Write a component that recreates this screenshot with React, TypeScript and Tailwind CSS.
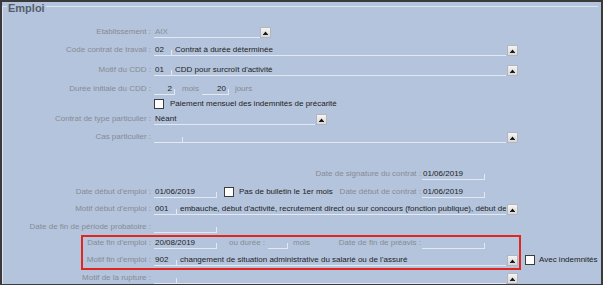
import type { ReactNode } from 'react';
import clsx from 'clsx';

const LINE = 'border-[#e2e9f3]';

function Label({ children, className }: { children: ReactNode; className?: string }) {
  return (
    <div className={clsx('h-[11px] shrink-0 whitespace-nowrap text-right leading-[10px] text-[#868b95]', className)}>
      {children}
    </div>
  );
}

function Field({
  w,
  tick,
  right,
  dim,
  pad = 'pl-[1px]',
  children,
}: {
  w: string;
  tick?: boolean;
  right?: boolean;
  dim?: boolean;
  pad?: string;
  children?: ReactNode;
}) {
  return (
    <div className={clsx('flex h-[11px] shrink-0 items-end border-b', LINE, w)}>
      <span
        className={clsx(
          'h-[10px] flex-1 overflow-hidden whitespace-nowrap leading-[10px]',
          right ? 'pr-[2px] text-right' : pad,
          dim ? 'text-[#8a8f99]' : 'text-[#1d1d1d]'
        )}
      >
        {children}
      </span>
      {tick && <span className="h-[5px] w-px bg-[#e2e9f3]" />}
    </div>
  );
}

function Arrow({ className }: { className?: string }) {
  return (
    <div
      className={clsx(
        'flex h-[11px] w-[11px] shrink-0 items-center justify-center border border-[#b3b7bd] bg-gradient-to-b from-[#f4f4f4] to-[#d8d8d8]',
        className
      )}
    >
      <svg width="5" height="4" viewBox="0 0 5 4" className="mt-[1px]">
        <path d="M2.5 0.5 L4.5 3 L0.5 3 Z" fill="#111" />
        <rect x="0" y="3" width="5" height="1" fill="#222" />
      </svg>
    </div>
  );
}

function Check({ className }: { className?: string }) {
  return <div className={clsx('mb-[1px] h-[10px] w-[10px] shrink-0 border border-[#3d3d3d] bg-white', className)} />;
}

function Combo({ label, code, codeW, text }: { label: string; code?: string; codeW: string; text?: string }) {
  return (
    <>
      <Label className="w-[148px]">{label}</Label>
      <Field w={clsx('ml-[3px]', codeW)} tick>
        {code}
      </Field>
      <Field w={codeW === 'w-[18px]' ? 'w-[334px]' : 'w-[329px]'} pad="pl-[3px]">
        {text}
      </Field>
      <Arrow className="ml-[1px]" />
    </>
  );
}

export default function App() {
  return (
    <div className="h-[285px] w-[605px] bg-white font-['Liberation_Sans',Arial,sans-serif] text-[8px]">
      <div className="h-[285px] w-[603px] overflow-hidden border-x-2 border-t-2 border-b border-[#3a3a3a] bg-[#b4c4dc]">
        <div className="mt-[4px] flex flex-col border-l border-[#dce4ef]">
          {/* group title */}
          <div className="flex h-[14px] items-start">
            <div className="w-[4px] border-t border-[#dce4ef]" />
            <div className="-mt-[4px] px-[1px] text-[11px] font-bold leading-[13px] text-[#565e6b]">Emploi</div>
            <div className="mr-[3px] flex-1 border-t border-[#dce4ef]" />
          </div>

          <div className="flex h-[18px] items-end">
            <Label className="w-[148px]">Etablissement :</Label>
            <Field w="ml-[3px] w-[106px]" dim>
              AIX
            </Field>
            <Arrow />
          </div>

          <div className="flex h-[18px] items-end">
            <Combo label="Code contrat de travail :" code="02" codeW="w-[18px]" text="Contrat à durée déterminée" />
          </div>

          <div className="flex h-[20px] items-end">
            <Combo label="Motif du CDD :" code="01" codeW="w-[18px]" text="CDD pour surcroît d'activité" />
          </div>

          <div className="flex h-[19px] items-end">
            <Label className="w-[148px]">Durée initiale du CDD :</Label>
            <Field w="ml-[3px] w-[21px]" tick right>
              2
            </Field>
            <Label className="ml-[7px]">mois</Label>
            <Field w="ml-[3px] w-[27px]" tick right>
              20
            </Field>
            <Label className="ml-[6px]">jours</Label>
          </div>

          <div className="flex h-[15px] items-end">
            <div className="flex h-[11px] items-center pl-[151px]">
              <Check className="mb-[2px]" />
              <span className="ml-[6px] mb-[1px] whitespace-nowrap text-[#1d1d1d]">
                Paiement mensuel des indemnités de précarité
              </span>
            </div>
          </div>

          <div className="flex h-[15px] items-end">
            <Label className="w-[148px]">Contrat de type particulier :</Label>
            <Field w="ml-[3px] w-[161px]">Néant</Field>
            <Arrow className="ml-[1px]" />
          </div>

          <div className="flex h-[18px] items-end">
            <Label className="w-[148px]">Cas particulier :</Label>
            <Field w="ml-[3px] w-[29px]" tick />
            <Field w="w-[323px]" />
            <Arrow className="ml-[1px]" />
          </div>

          <div className="flex h-[37px] items-end">
            <Label className="w-[418px]">Date de signature du contrat :</Label>
            <Field w="ml-[1px] w-[63px]" tick>
              01/06/2019
            </Field>
          </div>

          <div className="flex h-[18px] items-end">
            <Label className="w-[148px]">Date début d'emploi :</Label>
            <Field w="ml-[3px] w-[63px]" tick>
              01/06/2019
            </Field>
            <div className="flex w-[204px] items-center">
              <Check className="ml-[7px]" />
              <span className="ml-[5px] h-[11px] whitespace-nowrap leading-[10px] text-[#1d1d1d]">
                Pas de bulletin le 1er mois
              </span>
              <Label className="ml-auto">Date début de contrat :</Label>
            </div>
            <Field w="ml-[1px] w-[63px]" tick>
              01/06/2019
            </Field>
          </div>

          <div className="flex h-[17px] items-end">
            <Combo
              label="Motif début d'emploi :"
              code="001"
              codeW="w-[23px]"
              text="embauche, début d'activité, recrutement direct ou sur concours (fonction publique), début de contrat"
            />
          </div>

          <div className="flex h-[18px] items-end">
            <Label className="w-[148px]">Date de fin de période probatoire :</Label>
            <Field w="ml-[3px] w-[63px]" tick />
          </div>

          <div className="relative flex flex-col">
            <div className="flex h-[16px] items-end">
              <Label className="w-[148px]">Date fin d'emploi :</Label>
              <Field w="ml-[3px] w-[63px]" tick>
                20/08/2019
              </Field>
              <div className="flex w-[204px] items-end">
                <Label className="ml-[12px]">ou durée :</Label>
                <Field w="ml-[3px] w-[20px]" tick />
                <Label className="ml-[5px]">mois</Label>
                <Label className="ml-auto">Date de fin de préavis :</Label>
              </div>
              <Field w="ml-[1px] w-[63px]" tick />
            </div>

            <div className="flex h-[17px] items-end">
              <Combo
                label="Motif fin d'emploi :"
                code="902"
                codeW="w-[23px]"
                text="changement de situation administrative du salarié ou de l'assuré"
              />
              <div className="flex h-[11px] items-center">
                <Check className="ml-[7px] mb-[2px]" />
                <span className="ml-[4px] mb-[1px] whitespace-nowrap text-[#1d1d1d]">Avec indemnités</span>
              </div>
            </div>

            {/* highlight annotation */}
            <div className="pointer-events-none absolute left-[78px] top-[2px] h-[35px] w-[440px] border-2 border-[#e3261d]" />
          </div>

          <div className="flex h-[18px] items-end">
            <Combo label="Motif de la rupture :" codeW="w-[23px]" />
          </div>
        </div>
      </div>
    </div>
  );
}
